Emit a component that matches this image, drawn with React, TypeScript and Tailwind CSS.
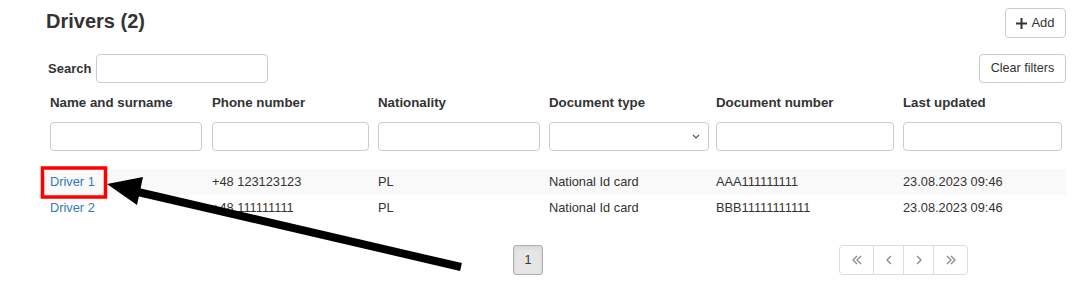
import React from "react";

type Driver = {
  name: string;
  phone: string;
  nationality: string;
  docType: string;
  docNumber: string;
  updated: string;
};

const drivers: Driver[] = [
  { name: "Driver 1", phone: "+48 123123123", nationality: "PL", docType: "National Id card", docNumber: "AAA111111111", updated: "23.08.2023 09:46" },
  { name: "Driver 2", phone: "+48 111111111", nationality: "PL", docType: "National Id card", docNumber: "BBB11111111111", updated: "23.08.2023 09:46" },
];

const columns = ["Name and surname", "Phone number", "Nationality", "Document type", "Document number", "Last updated"];
const inputWidths = ["w-[152px]", "w-[157px]", "w-[162px]", "w-[160px]", "w-[178px]", "w-[159px]"];
const grid = "grid grid-cols-[162px_166px_171px_167px_187px_1fr]";

function Chevron({ dir }: { dir: "left" | "right" }) {
  return (
    <svg width="6" height="10" viewBox="0 0 6 10" fill="none" stroke="#8a8a8a" strokeWidth="1.3">
      {dir === "left" ? <polyline points="5,1 1,5 5,9" /> : <polyline points="1,1 5,5 1,9" />}
    </svg>
  );
}

function DoubleChevron({ dir }: { dir: "left" | "right" }) {
  return (
    <svg width="10" height="10" viewBox="0 0 10 10" fill="none" stroke="#8a8a8a" strokeWidth="1.3">
      {dir === "left" ? (
        <>
          <polyline points="5,1 1,5 5,9" />
          <polyline points="9,1 5,5 9,9" />
        </>
      ) : (
        <>
          <polyline points="1,1 5,5 1,9" />
          <polyline points="5,1 9,5 5,9" />
        </>
      )}
    </svg>
  );
}

export default function App() {
  return (
    <div className="relative w-[1091px] h-[295px] bg-white text-[#333] text-[12.6px] font-['Liberation_Sans',Arial,sans-serif] pl-[41px] pr-[25px] overflow-hidden">
      {/* title + add */}
      <div className="flex items-start justify-between pt-[8px]">
        <h1 className="ml-[5px] mt-[2px] text-[20px] leading-[23px] font-bold">Drivers (2)</h1>
        <button className="h-[30px] w-[61px] flex items-center justify-center gap-[4px] border border-[#ccc] rounded-[4px] bg-white text-[13px]">
          <svg width="11" height="11" viewBox="0 0 11 11">
            <rect x="4.5" y="0" width="2" height="11" fill="#333" />
            <rect x="0" y="4.5" width="11" height="2" fill="#333" />
          </svg>
          Add
        </button>
      </div>

      {/* search row */}
      <div className="flex items-center justify-between mt-[16px] h-[29px]">
        <div className="flex items-center ml-[7px] gap-[5px]">
          <label className="font-bold text-[13px]">Search</label>
          <input className="w-[172px] h-[29px] border border-[#ccc] rounded-[4px] outline-none px-2" />
        </div>
        <button className="h-[29px] w-[87px] border border-[#ccc] rounded-[4px] bg-white text-[12.6px]">Clear filters</button>
      </div>

      {/* table header */}
      <div className={`${grid} pl-[9px] mt-[11px]`}>
        {columns.map((c) => (
          <div key={c} className="font-bold text-[13.3px] leading-[18px]">{c}</div>
        ))}
      </div>
      <div className={`${grid} pl-[9px] mt-[10px]`}>
        {inputWidths.map((w, i) =>
          i === 3 ? (
            <div key={i} className={`${w} h-[29px] border border-[#ccc] rounded-[4px] flex items-center justify-end pr-[8px]`}>
              <svg width="8" height="5" viewBox="0 0 8 5" fill="none" stroke="#555" strokeWidth="1.2">
                <polyline points="1,1 4,4 7,1" />
              </svg>
            </div>
          ) : (
            <input key={i} className={`${w} h-[29px] border border-[#ccc] rounded-[4px] outline-none px-2`} />
          )
        )}
      </div>

      {/* rows */}
      <div className="mt-[18px]">
        {drivers.map((d, i) => (
          <div key={d.name} className={`${grid} pl-[9px] h-[26px] items-center text-[12.8px] ${i === 0 ? "bg-[#f9f9f9]" : ""}`}>
            <div>
              <a href="#" className="text-[#337ab7]">{d.name}</a>
            </div>
            <div>{d.phone}</div>
            <div>{d.nationality}</div>
            <div>{d.docType}</div>
            <div>{d.docNumber}</div>
            <div>{d.updated}</div>
          </div>
        ))}
      </div>

      {/* pagination */}
      <div className="flex items-center mt-[24px]">
        <button className="ml-[472px] w-[30px] h-[30px] bg-[#e6e6e6] border border-[#adadad] rounded-[3px] shadow-[inset_0_2px_4px_rgba(0,0,0,0.08)] text-[12.6px]">
          1
        </button>
        <div className="ml-[296px] flex h-[30px] border border-[#ddd] rounded-[4px]">
          <div className="w-[34px] flex items-center justify-center border-r border-[#ddd]"><DoubleChevron dir="left" /></div>
          <div className="w-[30px] flex items-center justify-center border-r border-[#ddd]"><Chevron dir="left" /></div>
          <div className="w-[30px] flex items-center justify-center border-r border-[#ddd]"><Chevron dir="right" /></div>
          <div className="w-[33px] flex items-center justify-center"><DoubleChevron dir="right" /></div>
        </div>
      </div>

      {/* annotation overlay */}
      <svg className="absolute left-0 top-0 pointer-events-none" width="1091" height="295">
        <rect x="42.5" y="168" width="63" height="29" fill="none" stroke="#ff0000" strokeWidth="3.5" />
        <line x1="125" y1="189" x2="461" y2="267" stroke="#000" strokeWidth="8" />
        <polygon points="107,184 143,177 137,205" fill="#000" />
      </svg>
    </div>
  );
}
